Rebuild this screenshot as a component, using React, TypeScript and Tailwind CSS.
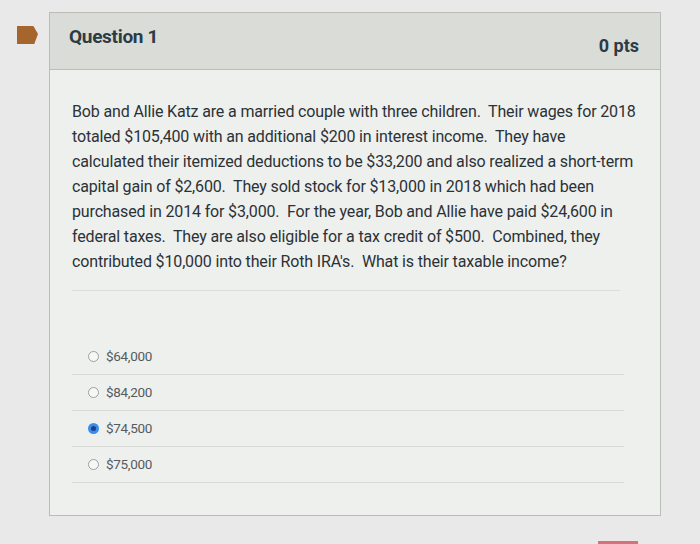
const options = [
  { label: "$64,000", checked: false },
  { label: "$84,200", checked: false },
  { label: "$74,500", checked: true },
  { label: "$75,000", checked: false },
];

const lines = [
  "Bob and Allie Katz are a married couple with three children.\u00a0 Their wages for 2018",
  "totaled $105,400 with an additional $200 in interest income.\u00a0 They have",
  "calculated their itemized deductions to be $33,200 and also realized a short-term",
  "capital gain of $2,600.\u00a0 They sold stock for $13,000 in 2018 which had been",
  "purchased in 2014 for $3,000.\u00a0 For the year, Bob and Allie have paid $24,600 in",
  "federal taxes.\u00a0 They are also eligible for a tax credit of $500.\u00a0 Combined, they",
  "contributed $10,000 into their Roth IRA's.\u00a0 What is their taxable income?",
];

const App = () => {
  return (
    <div className="w-[700px] h-[544px] bg-[#e8e9e8] flex pt-[12px] pl-[17px] font-['Roboto',sans-serif] text-[#2d3b45] overflow-hidden relative">
      <div className="w-[21px] h-[18px] mt-[14px] mr-[11px] bg-[#a6652c] [clip-path:polygon(0_0,78%_0,100%_45%,82%_100%,0_100%)]" />
      <div className="w-[612px] h-[504px] border border-[#b9bcb8] bg-[#eef0ee] flex flex-col">
        <div className="h-[57px] bg-[#dadcd7] border-b border-[#b9bcb8] flex items-center justify-between px-[19px]">
          <span className="text-[19px] font-bold tracking-[-0.3px] mt-[-8px]">Question 1</span>
          <span className="text-[18px] font-bold mt-[8px] mr-[2px]">0 pts</span>
        </div>
        <div className="pl-[22px] pr-[20px] pt-[29px]">
          <p className="text-[16px] leading-[25px] text-[#2b3236] tracking-[-0.15px] whitespace-nowrap">
            {lines.map((l) => (
              <span key={l} className="block">
                {l}
              </span>
            ))}
          </p>
          <div className="mt-[16px] border-t border-[#dcdedb] mr-[20px]" />
          <div className="mt-[48px] mr-[16px] flex flex-col">
            {options.map((o) => (
              <div key={o.label} className="h-[36px] border-b border-[#d9dbd8] flex items-center gap-[7px] pl-[16px]">
                <span
                  className={
                    o.checked
                      ? "w-[11px] h-[11px] rounded-full border-[3px] border-[#3b8ee8] bg-[#1c3f8f]"
                      : "w-[11px] h-[11px] rounded-full border border-[#9da19d] bg-[#f6f7f6]"
                  }
                />
                <span className="text-[13.5px] text-[#555b5f] tracking-[-0.3px]">{o.label}</span>
              </div>
            ))}
          </div>
        </div>
      </div>
      <div className="absolute left-[598px] bottom-0 w-[40px] h-[3px] bg-[#d8717d]" />
    </div>
  );
};

export default App;
